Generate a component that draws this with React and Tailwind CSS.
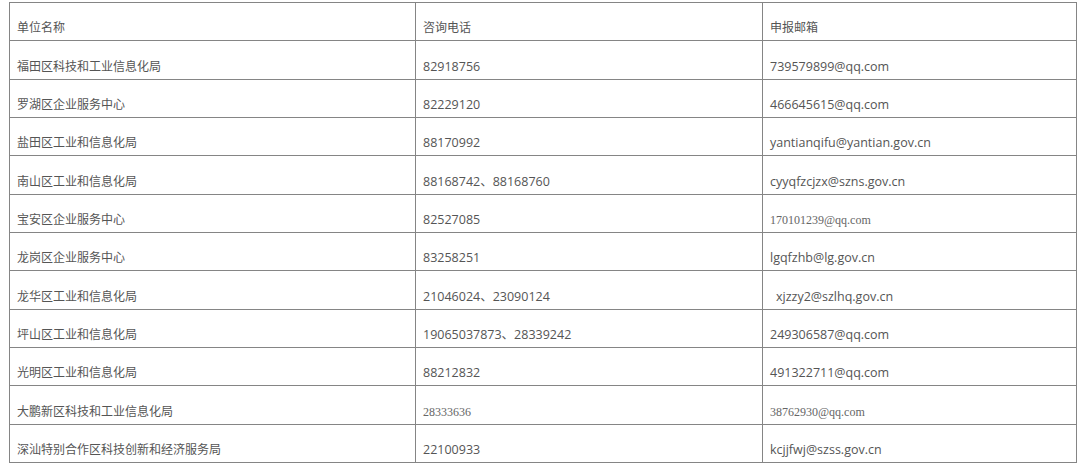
import React from "react";

const rows = [
  ["单位名称", "咨询电话", "申报邮箱"],
  ["福田区科技和工业信息化局", "82918756", "739579899@qq.com"],
  ["罗湖区企业服务中心", "82229120", "466645615@qq.com"],
  ["盐田区工业和信息化局", "88170992", "yantianqifu@yantian.gov.cn"],
  ["南山区工业和信息化局", "88168742、88168760", "cyyqfzcjzx@szns.gov.cn"],
  ["宝安区企业服务中心", "82527085", { serif: "170101239@qq.com" }],
  ["龙岗区企业服务中心", "83258251", "lgqfzhb@lg.gov.cn"],
  ["龙华区工业和信息化局", "21046024、23090124", { indent: "xjzzy2@szlhq.gov.cn" }],
  ["坪山区工业和信息化局", "19065037873、28339242", "249306587@qq.com"],
  ["光明区工业和信息化局", "88212832", "491322711@qq.com"],
  ["大鹏新区科技和工业信息化局", { serif: "28333636" }, { serif: "38762930@qq.com" }],
  ["深汕特别合作区科技创新和经济服务局", "22100933", "kcjjfwj@szss.gov.cn"],
];

function Cell({ v, j }) {
  if (typeof v === "object" && v.serif) {
    return (
      <span className="text-[12px] text-[#666] [font-family:'Liberation_Serif',serif]">
        {v.serif}
      </span>
    );
  }
  if (typeof v === "object" && v.indent) {
    return <span className="pl-[6px] text-[12.5px]">{v.indent}</span>;
  }
  if (j === 0 || /[\u4e00-\u9fff]/.test(v) && !/\d/.test(v)) {
    return <span className="text-[12px]">{v}</span>;
  }
  return <span className="text-[12.5px]">{v}</span>;
}

export default function App() {
  return (
    <div className="w-[1080px] h-[468px] bg-white pt-[2px] pl-[9px] [font-family:'Open_Sans','Noto_Sans_CJK_SC',sans-serif] text-[12px] text-[#555]">
      <table className="border-collapse w-[1068px] table-fixed">
        <colgroup>
          <col className="w-[406px]" />
          <col className="w-[347px]" />
          <col />
        </colgroup>
        <tbody>
          {rows.map((r, i) => (
            <tr key={i} className="h-[38.33px]">
              {r.map((c, j) => (
                <td
                  key={j}
                  className="border border-[#858585] align-bottom pl-[7px] pb-[3px] pt-0 leading-[18px] whitespace-nowrap"
                >
                  <Cell v={c} j={j} />
                </td>
              ))}
            </tr>
          ))}
        </tbody>
      </table>
    </div>
  );
}
